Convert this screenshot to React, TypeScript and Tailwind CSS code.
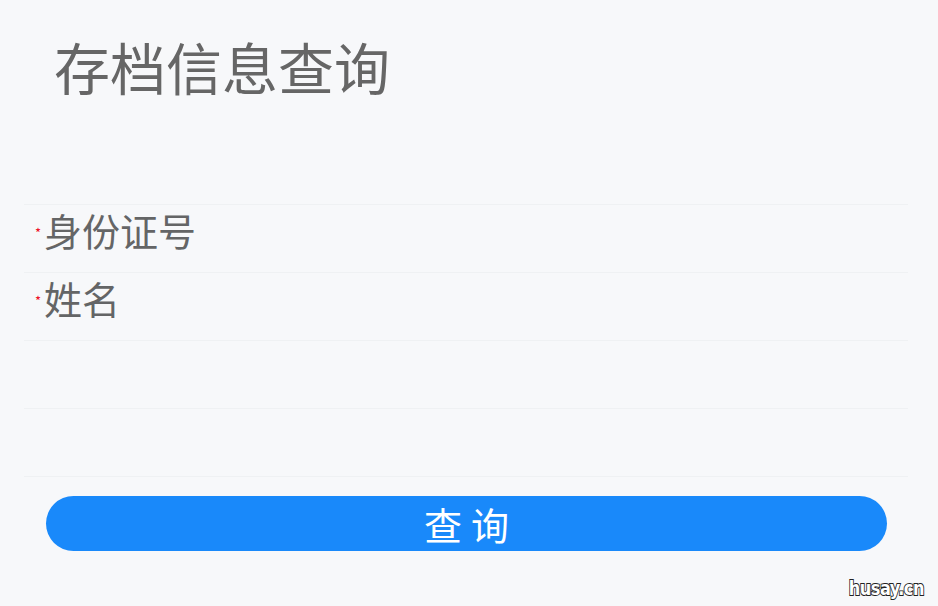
import React from "react";

const rows = [
  { label: "身份证号", required: true },
  { label: "姓名", required: true },
  { label: "", required: false },
  { label: "", required: false },
];

export default function App() {
  return (
    <div
      className="relative w-full h-[606px] overflow-hidden bg-[#f7f8fa]"
      style={{ fontFamily: '"Noto Sans CJK SC", "Noto Sans", sans-serif' }}
    >
      <h1 className="pl-[54px] pt-[38px] text-[56px] leading-[56px] font-normal text-[#666666]">
        存档信息查询
      </h1>
      <div className="mt-[110px] ml-[24px] mr-[30px] border-b border-[#eff1f3]">
        {rows.map((r, i) => (
          <div
            key={i}
            className="h-[68px] border-t border-[#eff1f3] flex items-start pt-[5px] pl-[11px]"
          >
            {r.label && (
              <div className="flex items-start">
                <span className="text-[#ee0a24] text-[13px] leading-[13px] mt-[16px] mr-[3px]">*</span>
                <span className="text-[38px] leading-[40px] text-[#646566]">{r.label}</span>
              </div>
            )}
          </div>
        ))}
      </div>
      <button className="mt-[19px] ml-[46px] w-[841px] h-[55px] rounded-full bg-[#1989fa] text-white text-[38px] leading-[55px] tracking-[9px] pl-[9px] flex items-center justify-center">
        查询
      </button>
      <div
        className="absolute right-[14px] bottom-[8px] text-[18px] leading-[20px] font-bold text-white tracking-[-0.5px] [-webkit-text-stroke:1.6px_#222] [paint-order:stroke_fill] scale-y-[1.1]"
        style={{ fontFamily: '"DejaVu Sans Condensed", "Liberation Sans Narrow", sans-serif' }}
      >
        husay.cn
      </div>
    </div>
  );
}
